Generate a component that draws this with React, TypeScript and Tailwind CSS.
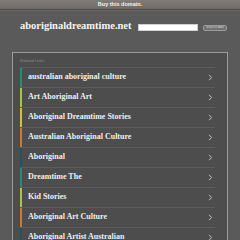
const links = [
  { label: "australian aboriginal culture", color: "bg-[#1f8f7a]" },
  { label: "Art Aboriginal Art", color: "bg-[#a8c83a]" },
  { label: "Aboriginal Dreamtime Stories", color: "bg-[#d9c227]" },
  { label: "Australian Aboriginal Culture", color: "bg-[#d2782a]" },
  { label: "Aboriginal", color: "bg-[#1d5566]" },
  { label: "Dreamtime The", color: "bg-[#1f8f7a]" },
  { label: "Kid Stories", color: "bg-[#a8c83a]" },
  { label: "Aboriginal Art Culture", color: "bg-[#d2782a]" },
  { label: "Aboriginal Artist Australian", color: "bg-[#1d5566]" },
]

function Chevron() {
  return (
    <svg className="h-[7px] w-[5px] shrink-0 text-[#c4c4c4]" viewBox="0 0 5 7" fill="none" stroke="currentColor">
      <path d="M1 0.8l2.6 2.7L1 6.2" strokeWidth={1} />
    </svg>
  )
}

export default function App() {
  return (
    <div className="h-[240px] w-[240px] overflow-hidden bg-[#5a5a5a]">
      {/* top bar */}
      <div className="flex h-[10px] items-center justify-center border-b border-[#4a4846] bg-gradient-to-b from-[#817c77] to-[#6f6b67] text-[5.5px] font-bold text-[#f2f2f2] [font-family:'Liberation_Sans',sans-serif]">
        Buy this domain.
      </div>
      <div className="h-px bg-[#6a6866]" />

      {/* header */}
      <div className="flex items-center pl-[20px] pr-[13px] pt-[10px]">
        <div className="text-[10.5px] font-bold leading-none text-[#f4f4f4] [font-family:'Liberation_Serif',serif]">
          aboriginaldreamtime.net
        </div>
        <div className="ml-auto mt-[3px] flex items-center gap-[5px]">
          <div className="h-[7px] w-[60px] border border-[#d0d0d0] bg-white" />
          <div className="flex h-[6px] w-[24px] shrink-0 items-center justify-center overflow-hidden whitespace-nowrap rounded-[2px] border border-[#9a9a9a] bg-[#727272] text-[3.5px] text-[#d0d0d0] [font-family:'Liberation_Sans',sans-serif]">
            Search Ads
          </div>
        </div>
      </div>

      {/* related links panel */}
      <div className="mx-[12px] mt-[20px] border border-[#9c9c9c] bg-[#4d4d4d] pl-[7px] pr-[12px]">
        <div className="h-[14px] pt-[6px] text-[4px] leading-none text-[#8a8a8a] [font-family:'Liberation_Sans',sans-serif]">
          Related Links
        </div>
        <div className="border-t border-[#5c5c5c]">
          {links.map((link) => (
            <div key={link.label} className="flex h-[20px] items-stretch border-b border-[#5c5c5c]">
              <div className={`w-[2px] ${link.color}`} />
              <div className="flex flex-1 items-center pl-[6px] pr-[2px]">
                <span className="flex-1 truncate text-[8px] font-bold text-[#efefef] [font-family:'Liberation_Serif',serif]">
                  {link.label}
                </span>
                <Chevron />
              </div>
            </div>
          ))}
        </div>
      </div>
    </div>
  )
}
